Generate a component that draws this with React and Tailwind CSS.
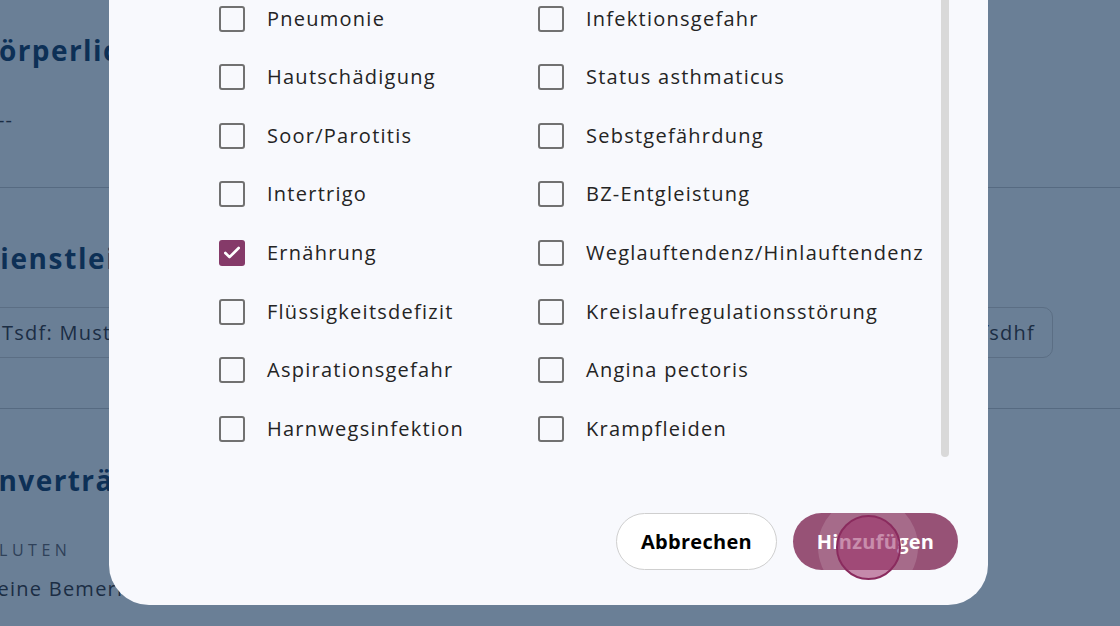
import { Check } from "lucide-react"

const left = [
  { label: "Pneumonie" },
  { label: "Hautschädigung" },
  { label: "Soor/Parotitis" },
  { label: "Intertrigo" },
  { label: "Ernährung", checked: true },
  { label: "Flüssigkeitsdefizit" },
  { label: "Aspirationsgefahr" },
  { label: "Harnwegsinfektion" },
]

const right = [
  { label: "Infektionsgefahr" },
  { label: "Status asthmaticus" },
  { label: "Sebstgefährdung" },
  { label: "BZ-Entgleistung" },
  { label: "Weglauftendenz/Hinlauftendenz" },
  { label: "Kreislaufregulationsstörung" },
  { label: "Angina pectoris" },
  { label: "Krampfleiden" },
]

function Row({ label, checked }) {
  return (
    <div className="flex h-[58.6px] items-center gap-[22px] pt-[2px]">
      {checked ? (
        <span className="flex h-[26px] w-[26px] items-center justify-center rounded-[3px] bg-[#853a69]">
          <Check className="h-[20px] w-[20px] text-white" strokeWidth={3.2} />
        </span>
      ) : (
        <span className="h-[26px] w-[26px] rounded-[3px] border-[2.5px] border-[#717171]" />
      )}
      <span className="text-[20px] tracking-[1.25px] text-[#242424]">{label}</span>
    </div>
  )
}

function Background() {
  return (
    <div className="flex flex-col pt-[32px] text-[#0d3056]">
      <h2 className="-ml-[21px] h-[36px] text-[28px] font-bold leading-[36px] tracking-[1.4px]">Körperliche Verfassung</h2>
      <div className="mt-[40px] -ml-[2px] h-[24px] text-[20px] leading-[24px] tracking-[1px] text-[#1b2d44]">--</div>
      <div className="mt-[55px] h-px bg-[#566a81]" />

      <h2 className="mt-[52px] -ml-[22px] h-[36px] text-[28px] font-bold leading-[36px] tracking-[1.6px]">Dienstleister</h2>
      <div className="mt-[31px] -ml-[20px] flex gap-4">
        <div className="flex h-[51px] w-[500px] items-center rounded-[10px] border border-[#5b6e84] pl-[21px] text-[20px] tracking-[1.25px] text-[#1b2d44]">
          Tsdf: Muster
        </div>
        <div className="flex h-[51px] w-[557px] items-center justify-end rounded-[10px] border border-[#5b6e84] pr-[17px] text-[20px] tracking-[1.25px] text-[#1b2d44]">
          Bsdf: Sdfsdhf
        </div>
      </div>
      <div className="mt-[50px] h-px bg-[#566a81]" />

      <h2 className="mt-[53px] -ml-[24px] h-[36px] text-[28px] font-bold leading-[36px] tracking-[1.4px]">Unverträglichkeiten</h2>
      <div className="mt-[42px] -ml-[17px] h-[20px] text-[16px] leading-[20px] tracking-[0.28em] text-[#2f4159]">GLUTEN</div>
      <div className="mt-[15px] -ml-[16px] h-[28px] text-[20px] leading-[28px] tracking-[1.25px] text-[#1b2d44]">Keine Bemerkung</div>
    </div>
  )
}

export default function App() {
  return (
    <div className="relative h-[626px] w-[1120px] overflow-hidden bg-[#6a7f96] font-['Open_Sans',sans-serif]">
      <Background />

      <div className="absolute bottom-[21px] left-[109px] flex w-[879px] flex-col rounded-[40px] bg-[#f8f9fd] pl-[110px] pr-[30px] pb-[35px] pt-[40px]">
        <div className="flex pr-[9px]">
          <div className="grid flex-1 grid-cols-[319px_1fr]">
            <div className="flex flex-col">
              {left.map((item) => (
                <Row key={item.label} {...item} />
              ))}
            </div>
            <div className="flex flex-col">
              {right.map((item) => (
                <Row key={item.label} {...item} />
              ))}
            </div>
          </div>
          <div className="w-[8px] rounded-full bg-[#d9d9d9]" />
        </div>

        <div className="mt-[56px] flex justify-end gap-4">
          <button className="h-[57px] w-[161px] rounded-full border border-[#cfcfcf] bg-white text-[20px] font-bold tracking-[0.3px] text-black">
            Abbrechen
          </button>
          <button className="relative h-[57px] w-[165px] rounded-full bg-[#975276] text-[20px] font-bold tracking-[0.3px] text-white">
            <span className="absolute inset-0 overflow-hidden rounded-full">
              <span className="absolute left-[25px] top-[-16px] h-[100px] w-[100px] rounded-full bg-white/15" />
            </span>
            <span className="relative">Hinzufügen</span>
            <span className="absolute left-[43px] top-[2px] h-[65px] w-[65px] rounded-full border-[2.5px] border-[#8a2b5e] bg-[#9a2f68]/55" />
          </button>
        </div>
      </div>
    </div>
  )
}
